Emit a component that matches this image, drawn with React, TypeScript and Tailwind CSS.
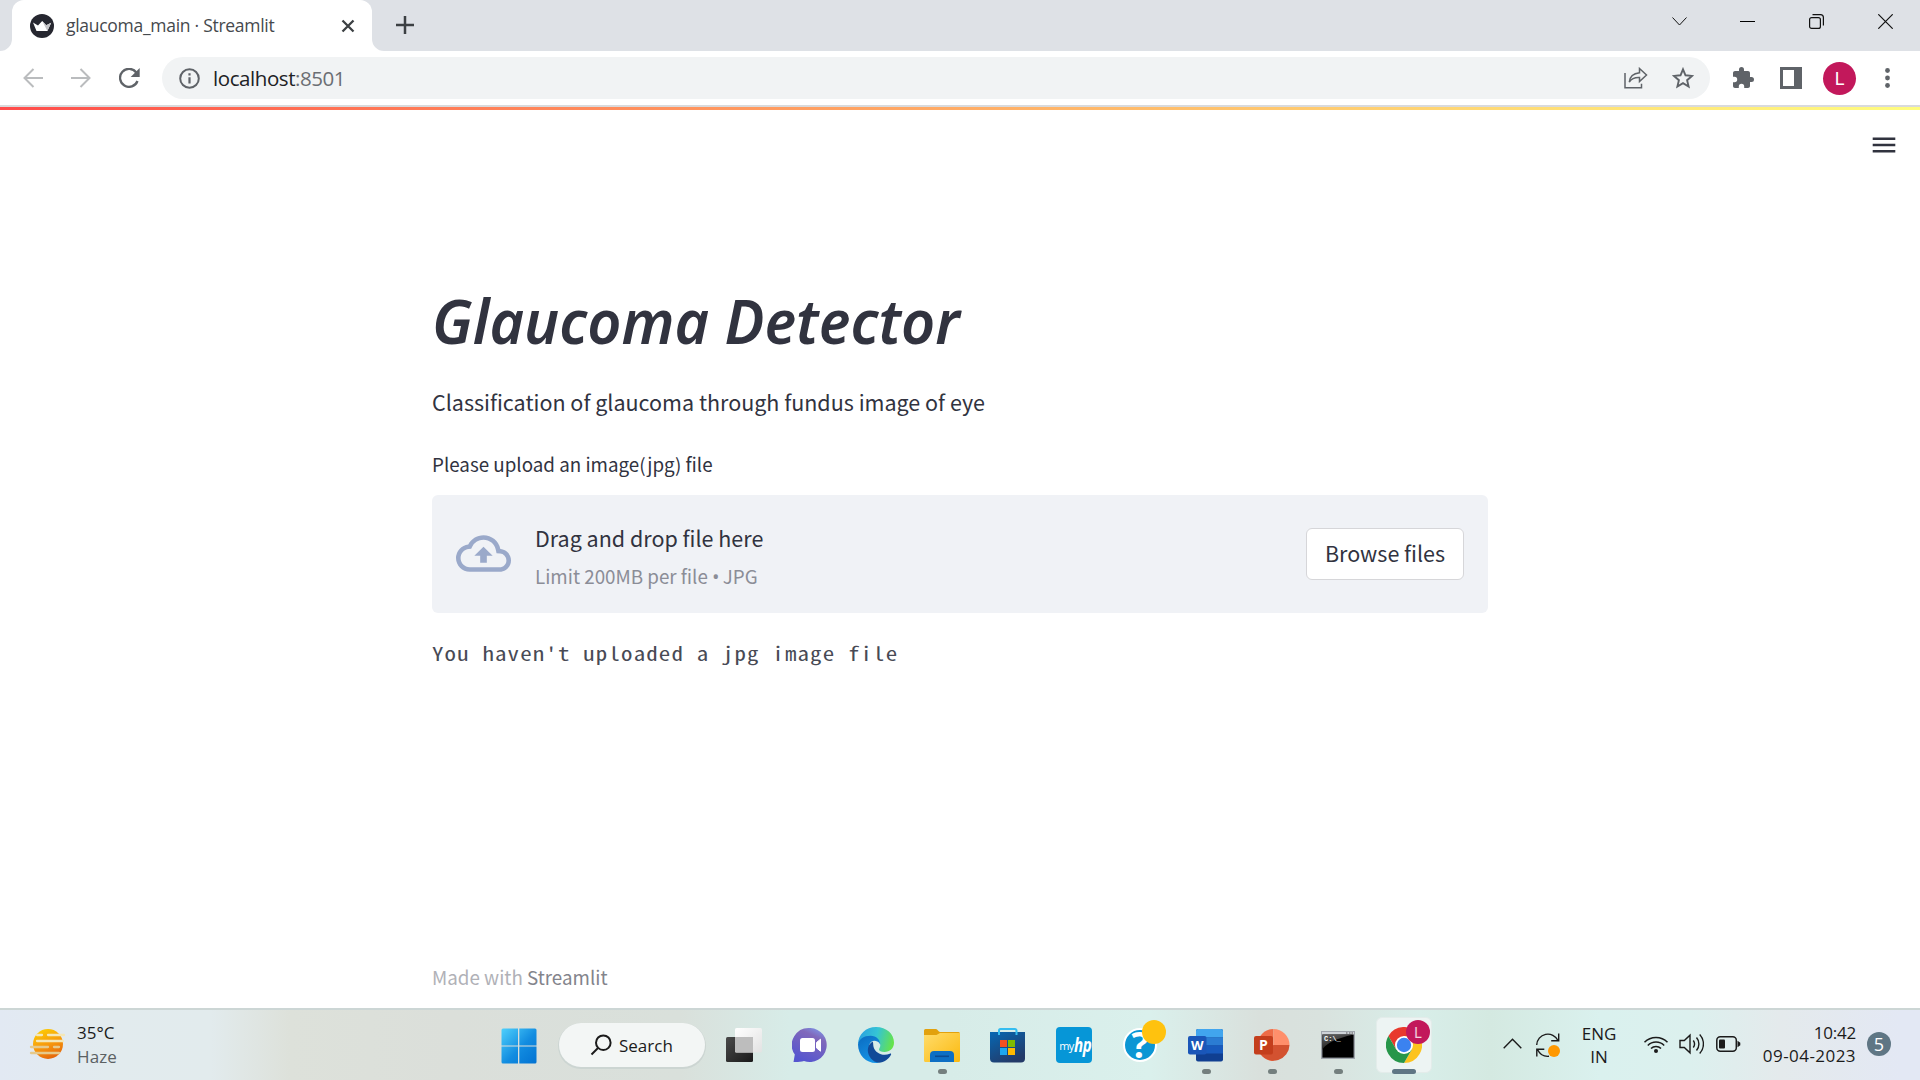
import React from 'react';

const SOURCE = "font-['Source_Sans_Pro','Noto_Sans_CJK_SC',sans-serif]";
const SEGOE = "font-['Segoe_UI','Open_Sans','Noto_Sans',sans-serif]";

function Tab() {
  return (
    <div className="relative ml-3 flex h-[51px] w-[360px] items-center rounded-t-xl bg-white">
      <svg className="absolute bottom-0 -left-3" width="12" height="12" viewBox="0 0 12 12">
        <path d="M12 0v12H0A12 12 0 0 0 12 0z" fill="#fff" />
      </svg>
      <svg className="absolute -right-3 bottom-0" width="12" height="12" viewBox="0 0 12 12">
        <path d="M0 0v12h12A12 12 0 0 1 0 0z" fill="#fff" />
      </svg>
      <svg className="ml-[18px] shrink-0" width="24" height="24" viewBox="0 0 24 24">
        <circle cx="12" cy="12" r="12" fill="#262730" />
        <path d="M3 8.6l5 3L12.200 7l4 4.200 5-2.400-3.800 8.100H6.500z" fill="#fff" />
        <path d="M12.200 7l4 4.200 5-2.400-3.800 8.100z" fill="#c4c4c8" />
      </svg>
      <span className="ml-3 w-[220px] whitespace-nowrap pb-px text-[17.500px] leading-6 tracking-[-0.280px] text-[#45494d]">
        glaucoma_main · Streamlit
      </span>
      <svg className="mr-[17px] ml-auto shrink-0" width="14" height="14" viewBox="0 0 14 14" stroke="#3c4043" strokeWidth="2.3">
        <path d="M1.500 1.500l11 11M12.500 1.500l-11 11" />
      </svg>
    </div>
  );
}

function TabStrip() {
  return (
    <div className="flex h-[51px] bg-[#dee1e6]">
      <Tab />
      <svg className="mt-4 ml-6" width="18" height="18" viewBox="0 0 18 18" stroke="#3c4043" strokeWidth="2.500">
        <path d="M9 0v18M0 9h18" />
      </svg>
      <div className="ml-auto flex h-[43px] items-center">
        <svg className="mr-[53px]" width="15" height="9" viewBox="0 0 15 9" fill="none" stroke="#111" strokeWidth="1">
          <path d="M.5.5l7 7.500 7-7.500" />
        </svg>
        <div className="mr-[54px] h-px w-[15px] bg-black" />
        <svg className="mr-[54px]" width="15" height="15" viewBox="0 0 15 15" fill="none" stroke="#111" strokeWidth="1.200">
          <rect x=".6" y="3.600" width="10.800" height="10.800" rx="2" />
          <path d="M3.500.7h8a2.900 2.900 0 0 1 2.900 2.900v8" />
        </svg>
        <svg className="mr-[27px]" width="15" height="15" viewBox="0 0 15 15" stroke="#111" strokeWidth="1.200">
          <path d="M.3.3l14.400 14.400M14.700.3L.3 14.700" />
        </svg>
      </div>
    </div>
  );
}

function Toolbar() {
  return (
    <div className="flex h-[54px] items-center bg-white pl-[23px]">
      <svg width="20" height="20" viewBox="0 0 20 20" fill="none" stroke="#babcbe" strokeWidth="2">
        <path d="M20 10H1.500M10.500 1l-9 9 9 9" />
      </svg>
      <svg className="ml-7" width="20" height="20" viewBox="0 0 20 20" fill="none" stroke="#babcbe" strokeWidth="2">
        <path d="M0 10h18.500M9.500 1l9 9-9 9" />
      </svg>
      <svg className="ml-7" width="21" height="20" viewBox="0 0 21 20">
        <path d="M17.300 4.500A9 9 0 1 0 18.500 13" fill="none" stroke="#5f6368" strokeWidth="2.300" />
        <path d="M20.700 0v9h-9z" fill="#5f6368" />
      </svg>
      <div className="ml-[22px] flex h-[42px] w-[1548px] items-center rounded-full bg-[#f1f3f4] pl-[17px]">
        <svg width="21" height="21" viewBox="0 0 21 21">
          <circle cx="10.500" cy="10.500" r="9.300" fill="none" stroke="#5f6368" strokeWidth="2" />
          <path d="M9.400 5.200h2.200v2.200H9.400zM9.400 9.200h2.200v6.300H9.400z" fill="#5f6368" />
        </svg>
        <span className="ml-[13px] text-[20.500px] leading-7 tracking-[-0.430px] text-[#202124]">
          localhost<span className="text-[#6b6e73]">:8501</span>
        </span>
        <svg className="ml-auto" width="24" height="22" viewBox="0 0 24 22" fill="none" stroke="#5f6368" strokeWidth="1.500">
          <path d="M1 6v14.700h16.500v-4" />
          <path d="M15.500 1.500l7 6.500-7 6.500v-4c-4.500-.2-8 1-10.200 4.500.5-5 3.700-8.500 10.200-9.200z" />
        </svg>
        <svg className="mr-4 ml-6" width="22" height="22" viewBox="0 0 22 22" fill="none" stroke="#5f6368" strokeWidth="1.900">
          <path d="M11 2.300l2.500 6 6.500.6-4.900 4.300 1.500 6.400-5.600-3.400-5.600 3.400 1.500-6.400L2 8.900l6.500-.6z" />
        </svg>
      </div>
      <svg className="ml-[21px]" width="24" height="24" viewBox="0 0 24 24" fill="#5f6368">
        <path d="M20.500 11H19V7c0-1.100-.9-2-2-2h-4V3.500a2.500 2.500 0 0 0-5 0V5H4c-1.100 0-2 .9-2 2v3.800h1.500a2.700 2.700 0 0 1 0 5.400H2V20c0 1.100.9 2 2 2h3.800v-1.500a2.700 2.700 0 0 1 5.400 0V22H17c1.100 0 2-.9 2-2v-4h1.500a2.500 2.500 0 0 0 0-5z" />
      </svg>
      <div className="ml-[25px] flex size-[22px] justify-start border-[3px] border-[#5f6368] bg-white">
        <div className="ml-auto h-full w-[5px] bg-[#5f6368]" />
      </div>
      <div className="ml-[21px] flex size-[33px] items-center justify-center rounded-full bg-[#c2185b] pt-px font-[Roboto,sans-serif] text-[18px] leading-none text-white">
        L
      </div>
      <svg className="ml-[28.500px]" width="5" height="20" viewBox="0 0 5 20" fill="#5f6368">
        <circle cx="2.500" cy="2.500" r="2.400" />
        <circle cx="2.500" cy="10" r="2.400" />
        <circle cx="2.500" cy="17.500" r="2.400" />
      </svg>
    </div>
  );
}

function Page() {
  return (
    <main className={`relative flex h-[898px] flex-col bg-white text-[#31333f] ${SOURCE}`}>
      <div className="flex h-[43px] justify-end pt-[27px] pr-6">
        <svg width="24" height="16" viewBox="0 0 24 16" stroke="#31333f" strokeWidth="2.400">
          <path d="M.7 1.700h22.600M.7 8h22.600M.7 14.300h22.600" />
        </svg>
      </div>
      <div className="mx-auto flex w-[1056px] flex-1 flex-col">
        <h1 className="mt-[128px] h-20 origin-left scale-x-[0.972] whitespace-nowrap font-['Noto_Sans',sans-serif] text-[61px] leading-[80px] font-semibold italic">
          Glaucoma Detector
        </h1>
        <p className="mt-[23px] h-9 text-[21.500px] leading-9">Classification of glaucoma through fundus image of eye</p>
        <p className="mt-7 h-8 text-[18.800px] leading-8">Please upload an image(jpg) file</p>
        <section className="mt-[15px] flex h-[118px] items-center rounded-md bg-[#f0f2f6] px-6">
          <svg className="mb-0.5" width="55" height="55" viewBox="0 0 24 24" fill="#9aa9ca">
            <path d="M19.350 10.040A7.490 7.490 0 0 0 12 4C9.110 4 6.600 5.640 5.350 8.040A5.994 5.994 0 0 0 0 14c0 3.310 2.690 6 6 6h13c2.760 0 5-2.240 5-5 0-2.640-2.050-4.780-4.650-4.960zM19 18H6c-2.210 0-4-1.790-4-4 0-2.050 1.530-3.760 3.560-3.970l1.070-.11.5-.95A5.469 5.469 0 0 1 12 6c2.620 0 4.880 1.860 5.390 4.430l.3 1.500 1.530.11A2.980 2.980 0 0 1 22 15c0 1.650-1.350 3-3 3zM8 13h2.550v3h2.900v-3H16l-4-4z" />
          </svg>
          <div className="ml-6 flex flex-col pt-1">
            <span className="text-[21.500px] leading-9">Drag and drop file here</span>
            <span className="mt-1 h-8 text-[18.800px] leading-8 text-[#8b8d97]">
              Limit 200MB per file <span className="font-['Open_Sans',sans-serif] text-[20px] leading-none tracking-[-1px]">•</span> JPG
            </span>
          </div>
          <button className="ml-auto flex h-[52px] w-[158px] items-center justify-center rounded-md border border-[#d6d6d9] bg-white pb-px text-[21.500px]">
            Browse files
          </button>
        </section>
        <pre className="mt-[24px] h-8 origin-left scale-x-[1.22] font-['Noto_Sans_Mono_CJK_SC','Liberation_Mono',monospace] text-[18.800px] leading-8 tracking-[0.940px] text-[#484a55]">
          You haven't uploaded a jpg image file
        </pre>
        <footer className="mt-auto mb-[15px] text-[18.800px] leading-8 text-[#b0b1b7]">
          Made with <span className="text-[#83848c]">Streamlit</span>
        </footer>
      </div>
    </main>
  );
}

function AppCell({ children, dot }: { children: React.ReactNode; dot?: boolean }) {
  return (
    <div className="relative flex h-[70px] w-[66px] items-center justify-center">
      {children}
      {dot && <div className="absolute bottom-[6px] h-[5px] w-[9px] rounded-full bg-[#747f7e]" />}
    </div>
  );
}

function StartIcon() {
  return (
    <svg width="36" height="36" viewBox="0 0 36 36">
      <defs>
        <linearGradient id="win" x1="0" y1="0" x2="1" y2="1" gradientUnits="objectBoundingBox">
          <stop offset="0" stopColor="#4ed0fc" />
          <stop offset=".55" stopColor="#128ce0" />
          <stop offset="1" stopColor="#0272d2" />
        </linearGradient>
      </defs>
      <path d="M2 .5h15v17H.5V2A1.500 1.500 0 0 1 2 .5zM18.300.5h15.700A1.500 1.500 0 0 1 35.500 2v15.500H18.300zM.5 18.500H17v17H2A1.500 1.500 0 0 1 .5 34zM18.300 18.500h17.200V34a1.500 1.500 0 0 1-1.500 1.500H18.300z" fill="url(#win)" />
    </svg>
  );
}

function TaskViewIcon() {
  return (
    <svg width="36" height="36" viewBox="0 0 36 36">
      <defs>
        <linearGradient id="tvd" x1="0" y1="0" x2="1" y2="1">
          <stop offset="0" stopColor="#4a4a4a" />
          <stop offset="1" stopColor="#191919" />
        </linearGradient>
        <linearGradient id="tvl" x1="0" y1="0" x2="1" y2="1">
          <stop offset="0" stopColor="#fff" />
          <stop offset="1" stopColor="#e2e2e2" />
        </linearGradient>
      </defs>
      <rect x="0" y="10" width="27" height="25" rx="1.500" fill="url(#tvd)" />
      <rect x="9" y="1" width="27" height="24.500" rx="1.500" fill="url(#tvl)" />
      <path d="M9 10h18v15.500H10.500A1.500 1.500 0 0 1 9 24z" fill="#bdbdbd" />
    </svg>
  );
}

function ChatIcon() {
  return (
    <svg width="36" height="36" viewBox="0 0 36 36">
      <defs>
        <linearGradient id="chat" x1=".9" y1="0" x2=".4" y2="1">
          <stop offset="0" stopColor="#7d9df0" />
          <stop offset=".3" stopColor="#8068bb" />
          <stop offset="1" stopColor="#5555cf" />
        </linearGradient>
      </defs>
      <path d="M18.500 1A17 17 0 1 1 12 34c-3 .9-7 1.200-10.500 1l1.300-7.500A17 17 0 0 1 18.500 1z" fill="url(#chat)" />
      <rect x="8" y="11" width="15" height="14" rx="2.500" fill="#fff" />
      <path d="M24.500 15.500l4-3.300v12l-4-3.300z" fill="#fff" stroke="#fff" strokeLinejoin="round" />
    </svg>
  );
}

function EdgeIcon() {
  return (
    <svg width="36" height="36" viewBox="0 0 36 36">
      <defs>
        <linearGradient id="edgeTop" x1="0" y1=".3" x2="1" y2=".5">
          <stop offset="0" stopColor="#2aa0e0" />
          <stop offset=".5" stopColor="#35c4d5" />
          <stop offset="1" stopColor="#66e34a" />
        </linearGradient>
        <linearGradient id="edgeL" x1="0" y1="0" x2=".5" y2="1">
          <stop offset="0" stopColor="#0b6bc0" />
          <stop offset="1" stopColor="#1593e6" />
        </linearGradient>
      </defs>
      <path d="M0 18C0 7 8 0 18 0c10.500 0 18 7 18 15.500 0 6-4.500 9.500-9.500 9.500-3.500 0-5.500-1-5.500-2.500 0-1 1.300-1.900 1.300-4.500 0-3-2.500-6-7.300-6C7 12 0 15 0 18z" fill="url(#edgeTop)" />
      <path d="M0 17.500C1 12 6 8.800 12.500 8.800c6 0 9.800 4.200 9.800 9.200 0 0-1.300-4.200-6-4.200-4 0-5.500 4-5.500 8 0 6.500 4 12 10.200 13.900-1 .2-2 .3-3 .3C8 36 0 28 0 17.500z" fill="url(#edgeL)" />
      <path d="M14.500 14.500C11 17 9.800 20 9.800 23c0 6 4.700 12.300 11.200 12.700 5 0 10-4 12-8 .5-1-.5-1.400-1.200-1-6.800 3-14.800-.7-16.300-7-.5-2 0-4-1-5.200z" fill="#114a98" />
    </svg>
  );
}

function FolderIcon() {
  return (
    <svg width="36" height="36" viewBox="0 0 36 36">
      <defs>
        <linearGradient id="fold" x1="0" y1="0" x2="1" y2="1">
          <stop offset="0" stopColor="#ffdc6b" />
          <stop offset="1" stopColor="#fbb90f" />
        </linearGradient>
      </defs>
      <path d="M0 3.500A1.500 1.500 0 0 1 1.500 2H12c1.500 0 2.500 3 4 3h18.500A1.500 1.500 0 0 1 36 6.500V12H0z" fill="#e2a10d" />
      <path d="M0 8h12.500l3.500-2h20v27.500A1.500 1.500 0 0 1 34.500 35h-33A1.500 1.500 0 0 1 0 33.500z" fill="url(#fold)" />
      <path d="M6 35v-7a4 4 0 0 1 4-4h16a4 4 0 0 1 4 4v7z" fill="#0d6fc4" />
      <path d="M11 29.300h14" stroke="#0a4b93" strokeWidth="1.600" />
    </svg>
  );
}

function StoreIcon() {
  return (
    <svg width="36" height="36" viewBox="0 0 36 36">
      <defs>
        <linearGradient id="store" x1="0" y1="0" x2=".6" y2="1">
          <stop offset="0" stopColor="#0668b4" />
          <stop offset="1" stopColor="#233a68" />
        </linearGradient>
      </defs>
      <path d="M0 5h35v26.500a4 4 0 0 1-4 4H4a4 4 0 0 1-4-4z" fill="url(#store)" />
      <path d="M9 8V3.500A1.500 1.500 0 0 1 10.500 2h14.500a1.500 1.500 0 0 1 1.500 1.500V8" fill="none" stroke="#35bdf0" strokeWidth="2" />
      <path d="M10 13h7v7h-7z" fill="#f25022" />
      <path d="M18 13h7v7h-7z" fill="#7fba00" />
      <path d="M10 21h7v7h-7z" fill="#1ea7ee" />
      <path d="M18 21h7v7h-7z" fill="#ffb900" />
    </svg>
  );
}

function HelpIcon() {
  return (
    <div className="relative flex size-[34px] items-center justify-center rounded-full border-2 border-white bg-[#0c96d4] font-['Open_Sans',sans-serif] text-[36px] leading-none font-bold text-white">
      ?
      <div className="absolute -top-[10px] left-[17px] size-6 rounded-full bg-[#ffc20e]" />
    </div>
  );
}

function WordIcon() {
  return (
    <svg width="36" height="36" viewBox="0 0 36 36">
      <rect x="8" y="2" width="27" height="32.500" rx="2" fill="#103f91" />
      <path d="M10 2h23a2 2 0 0 1 2 2v6.500H8V4a2 2 0 0 1 2-2z" fill="#41a5ee" />
      <path d="M8 10.500h27v8H8z" fill="#2b7cd3" />
      <path d="M8 18.500h27v8H8z" fill="#185abd" />
      <rect x="0" y="9" width="18.500" height="18.500" rx="2" fill="#1a56b8" />
      <text x="9.200" y="23.200" textAnchor="middle" fontFamily="Open Sans" fontWeight="700" fontSize="13" fill="#fff">W</text>
    </svg>
  );
}

function PowerPointIcon() {
  return (
    <svg width="36" height="36" viewBox="0 0 36 36">
      <path d="M19.500 2v32a16 16 0 0 1 0-32z" fill="#ed6c47" />
      <path d="M19.500 2a16 16 0 0 1 16 16h-16z" fill="#ff8f6b" />
      <path d="M35.500 18a16 16 0 0 1-29 9l13-9z" fill="#d35230" />
      <rect x="0" y="9" width="19" height="18.500" rx="2" fill="#c43e1c" />
      <text x="9.400" y="23.400" textAnchor="middle" fontFamily="Open Sans" fontWeight="700" fontSize="14" fill="#fff">P</text>
    </svg>
  );
}

function TerminalIcon() {
  return (
    <svg className="mr-px mb-px" width="34" height="28" viewBox="0 0 34 28">
      <defs>
        <linearGradient id="term" x1="0" y1="0" x2=".5" y2="1">
          <stop offset="0" stopColor="#666" />
          <stop offset="1" stopColor="#111" />
        </linearGradient>
      </defs>
      <rect x=".7" y=".7" width="32.600" height="26.600" fill="#000" stroke="#9fa5ac" strokeWidth="1.400" />
      <path d="M1 1h32v2.500H1z" fill="#ced3d8" />
      <path d="M1.400 3.500h31.200C22 6 6 10 1.400 19z" fill="url(#term)" />
      <path d="M25 2h1.500M28 2h1.500M30.500 2H32" stroke="#555" />
      <text x="3" y="10.200" fontFamily="Liberation Mono" fontSize="7" fontWeight="700" fill="#fff">C:\_</text>
    </svg>
  );
}

function ChromeIcon() {
  return (
    <div className="relative flex size-14 items-center justify-center rounded-md border border-[#e3ecea] bg-[#edf4f3]">
      <svg width="36" height="36" viewBox="0 0 36 36">
        <path d="M2.400 9A18 18 0 0 1 33.600 9H18l-7.800 13.500z" fill="#e8392d" />
        <path d="M33.600 9A18 18 0 0 1 18 36l7.800-13.500L18 9z" fill="#fcc31e" />
        <path d="M18 36A18 18 0 0 1 2.400 9l7.800 13.500h15.600z" fill="#27964a" />
        <circle cx="18" cy="18" r="9" fill="#fff" />
        <circle cx="18" cy="18" r="7.200" fill="#3b82f0" />
      </svg>
      <div className="absolute top-[2px] right-px flex size-6 items-center justify-center rounded-full bg-[#c2185b] pt-px font-[Roboto,sans-serif] text-sm leading-none text-white/80">
        L
      </div>
    </div>
  );
}

function Tray() {
  return (
    <div className={`flex h-[70px] flex-1 items-center pl-[66px] text-[#1b1b1b] ${SEGOE}`}>
      <svg className="mb-1" width="19" height="11" viewBox="0 0 19 11" fill="none" stroke="#1b1b1b" strokeWidth="1.400">
        <path d="M.7 10.300l8.800-9 8.800 9" />
      </svg>
      <svg className="mb-px ml-[13px]" width="26" height="26" viewBox="0 0 26 26" fill="none" stroke="#1b1b1b" strokeWidth="1.400">
        <path d="M1.700 13A11.200 11.200 0 0 1 23 8.500M23.700 1.500v7.300h-7.500M1.800 24.500v-7.300h7.500M2.800 18A11.200 11.200 0 0 0 14 24.300" />
        <circle cx="19" cy="19" r="6" fill="#ff9800" stroke="none" />
      </svg>
      <div className="ml-[15px] w-[46px] text-center text-[17px] leading-[23px]">
        ENG
        <br />
        IN
      </div>
      <svg className="mb-0.5 ml-[21px]" width="26" height="20" viewBox="0 0 26 20" fill="none" stroke="#1b1b1b" strokeWidth="1.500">
        <path d="M1.500 8.200a16.200 16.200 0 0 1 23 0M4.800 11.500a11.600 11.600 0 0 1 16.400 0M8 14.600a7 7 0 0 1 10 0" />
        <circle cx="13" cy="17" r="2" fill="#1b1b1b" stroke="none" />
      </svg>
      <svg className="mb-0.5 ml-[10px]" width="25" height="22" viewBox="0 0 25 22" fill="none" stroke="#1b1b1b" strokeWidth="1.400">
        <path d="M1 7.500h4.300L11 2.200v17.600l-5.700-5.300H1zM14.300 7.500a6 6 0 0 1 0 7M17.500 4.500a10 10 0 0 1 0 13M20.700 1.500a14 14 0 0 1 0 19" />
      </svg>
      <svg className="mb-0.5 ml-[12px]" width="25" height="16" viewBox="0 0 25 16" fill="none" stroke="#1b1b1b" strokeWidth="1.500">
        <rect x=".8" y=".8" width="19.500" height="14.400" rx="3.500" />
        <rect x="3" y="3.500" width="6" height="9" rx="1" fill="#1b1b1b" stroke="none" />
        <path d="M21.500 4.800l2.800 2v2.400l-2.800 2z" fill="#1b1b1b" stroke="none" />
      </svg>
      <div className="ml-auto pb-[3px] text-right text-[17px] leading-[23px]">
        <span className="tracking-[-0.200px]">10:42</span>
        <br />
        <span className="tracking-[0.450px]">09-04-2023</span>
      </div>
      <div className="mr-[29px] mb-0.5 ml-[11px] flex size-6 items-center justify-center rounded-full bg-[#5f7684] text-[18px] leading-none text-white">5</div>
    </div>
  );
}

function Taskbar() {
  return (
    <div className="flex h-[72px] items-center border-t-2 border-[#ccd6d5] bg-[linear-gradient(90deg,#e2e9f3_0px,#e2ebee_110px,#e2ebed_210px,#dde1da_290px,#dbdfda_450px,#d9e0db_680px,#d7ece8_790px,#d7ece8_950px,#daf0ec_1150px,#d9e0dc_1260px,#d9e2de_1320px,#d8eee9_1420px,#d4e9e1_1490px,#daf1ee_1600px,#dcf0ee_1690px,#e4eaec_1780px,#e3e8f4_1900px)]">
      <div className={`flex h-[70px] w-[485px] items-center pl-[29px] ${SEGOE}`}>
        <svg className="mb-0.5" width="38" height="32" viewBox="0 0 38 32">
          <defs>
            <linearGradient id="sun" x1=".3" y1="0" x2=".7" y2="1">
              <stop offset="0" stopColor="#fccb05" />
              <stop offset=".5" stopColor="#f79a0c" />
              <stop offset="1" stopColor="#e3620c" />
            </linearGradient>
          </defs>
          <circle cx="19" cy="16" r="15" fill="url(#sun)" />
          <g stroke="#f4e7b8" strokeWidth="2.300" strokeLinecap="round">
            <path d="M8 7h5M19 7h16M8 13h26" />
            <path d="M2 19h17M25 19h5M2 25h28" stroke="#e6c98a" />
          </g>
        </svg>
        <div className="ml-[10px] text-[17px] leading-6 text-[#1b1b1b]">
          <span>35°C</span>
          <br />
          <span className="tracking-[0.100px] text-[#5b6163]">Haze</span>
        </div>
      </div>
      <AppCell>
        <div className="pt-px pl-px">
          <StartIcon />
        </div>
      </AppCell>
      <div className={`mr-1.5 ml-2 flex h-11 w-[146px] items-center rounded-full bg-[#f3f6f5] pl-[31px] shadow-[0_1px_0_1px_#ccd5d2] ${SEGOE}`}>
        <svg width="22" height="22" viewBox="0 0 22 22" fill="none" stroke="#1b1b1b" strokeWidth="2">
          <circle cx="13.300" cy="8.700" r="7.300" />
          <path d="M8 14l-6.500 6.500" />
        </svg>
        <span className="ml-[7px] pt-px text-[17px] leading-6 text-[#1b1b1b]">Search</span>
      </div>
      <AppCell><TaskViewIcon /></AppCell>
      <AppCell><ChatIcon /></AppCell>
      <AppCell><EdgeIcon /></AppCell>
      <AppCell dot><FolderIcon /></AppCell>
      <AppCell><StoreIcon /></AppCell>
      <AppCell>
        <div className="flex size-9 items-center justify-center rounded-sm bg-[#0696d7] font-['Open_Sans',sans-serif] leading-none tracking-[-0.500px] text-white">
          <span className="text-[11px]">my</span>
          <span className="w-[15px] origin-left scale-x-[0.8] text-[19px] font-bold italic">hp</span>
        </div>
      </AppCell>
      <AppCell><HelpIcon /></AppCell>
      <AppCell dot><WordIcon /></AppCell>
      <AppCell dot><PowerPointIcon /></AppCell>
      <AppCell dot><TerminalIcon /></AppCell>
      <AppCell>
        <ChromeIcon />
        <div className="absolute bottom-[6px] h-[5px] w-6 rounded-full bg-[#5f7684]" />
      </AppCell>
      <Tray />
    </div>
  );
}

export default function App() {
  return (
    <div className={`flex h-[1080px] w-[1920px] flex-col overflow-hidden bg-white ${SEGOE}`}>
      <TabStrip />
      <Toolbar />
      <div className="h-0.5 bg-[#d9dadc]" />
      <div className="h-[3px] bg-linear-to-r from-[#ff4b4b] to-[#fffd80]" />
      <Page />
      <Taskbar />
    </div>
  );
}
